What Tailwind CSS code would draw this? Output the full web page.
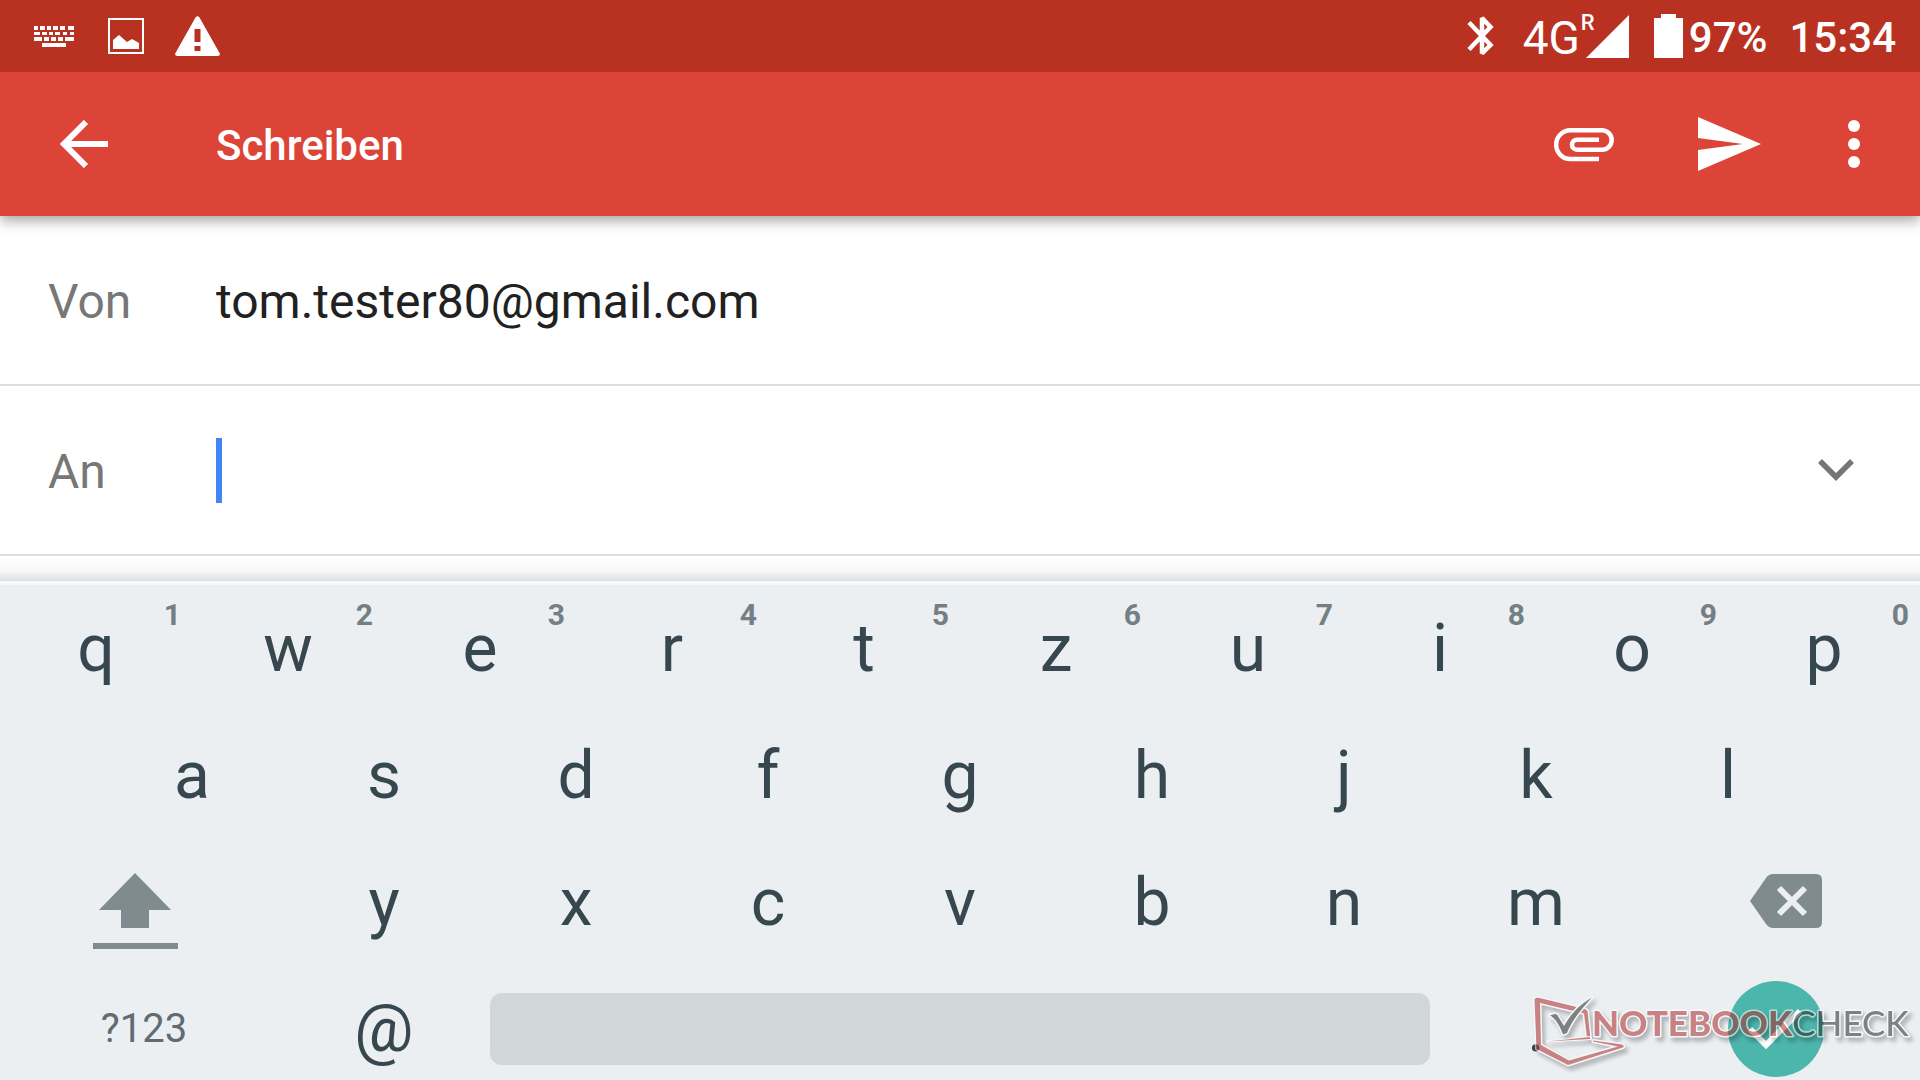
<!DOCTYPE html>
<html lang="de">

<head>
  <meta charset="UTF-8" />
  <meta name="viewport" content="width=device-width, initial-scale=1" />
  <title>Schreiben</title>
  <script src="https://cdn.jsdelivr.net/npm/@tailwindcss/browser@4"></script>
</head>

<body class="relative flex min-h-screen flex-col overflow-hidden bg-white font-['Roboto','Liberation_Sans',sans-serif]">

  <!-- Statusleiste -->
  <div class="relative z-20 flex h-[72px] items-center bg-[#b93221] text-[42px] leading-none font-medium text-white">
    <svg class="ml-[34px] h-[21px] w-10" viewBox="0 0 40 21" fill="currentColor" aria-hidden="true">
      <path d="M0 0h4v4H0zM6 0h5v4H6zM13 0h4v4h-4zM19 0h5v4h-5zM26 0h5v4h-5zM34 0h6v4h-6zM0 6h6v3H0zM8 6h5v3H8zM15 6h4v3h-4zM21 6h5v3h-5zM29 6h4v3h-4zM36 6h4v3h-4zM0 11h8v4H0zM10 11h5v4h-5zM17 11h5v4h-5zM24 11h5v4h-5zM31 11h9v4h-9zM8 17h24v4H8z" />
    </svg>
    <svg class="ml-[34px] size-9" viewBox="0 0 36 36" fill="currentColor" aria-hidden="true">
      <rect x="1" y="1" width="34" height="34" fill="none" stroke="currentColor" stroke-width="2" />
      <path d="M5 22l6-5 8 7 5-3 7 4v6H5z" />
    </svg>
    <svg class="ml-[31px] h-10 w-[45px]" viewBox="0 0 45 40" aria-hidden="true">
      <path fill="currentColor" fill-rule="evenodd" d="M20.500 1.500q2-2.500 4 0L44.800 37.500q.5 2.500-2 2.500H2.200q-2.500 0-2-2.500zM19.500 13v13h6V13zM19.500 30v5h6v-5z" />
    </svg>

    <svg class="ml-auto h-11 w-[27px]" viewBox="0 0 27 44" fill="none" stroke="currentColor" stroke-width="4.500" stroke-miterlimit="2" aria-hidden="true">
      <path d="M2 8.500 23.500 31 15 39.500V4L23.500 13 2 35.500" />
    </svg>
    <div class="relative ml-[29px] flex h-12 w-[106px] items-center">
      <span class="pt-[3px] text-[46px] font-normal">4G</span>
      <sup class="absolute top-0 left-[58px] text-[22px] leading-none font-medium">R</sup>
      <svg class="absolute right-0 h-[43px] w-[43px]" viewBox="0 0 43 43" fill="currentColor" aria-hidden="true">
        <path d="M43 0v43H0z" />
      </svg>
    </div>
    <svg class="ml-[25px] h-11 w-[29px]" viewBox="0 0 29 44" fill="currentColor" aria-hidden="true">
      <path d="M0 4h7V0h15v4h7v40H0z" />
    </svg>
    <span class="ml-[6px] pt-[3px]">97%</span>
    <span class="mr-6 ml-[22px] pt-[3px]">15:34</span>
  </div>

  <!-- App-Leiste -->
  <header class="relative z-10 flex h-36 items-center bg-[#dc4438] text-white shadow-[0_5px_12px_rgba(0,0,0,0.35)]">
    <button class="ml-[60px]" aria-label="Zurück">
      <svg class="size-12" viewBox="0 0 48 48" fill="none" stroke="currentColor" stroke-width="6">
        <path d="M26 2 4 24l22 22M4 24h44" />
      </svg>
    </button>
    <h1 class="ml-[108px] pt-[3px] text-[42px] leading-none font-medium">Schreiben</h1>
    <button class="ml-auto" aria-label="Datei anhängen">
      <svg class="h-9 w-[60px]" viewBox="0 -2 60 36" fill="none" stroke="currentColor" stroke-width="4.500">
        <path d="M45 31H16.500a14.200 14.200 0 0 1 0-28.700H48a9.700 9.700 0 0 1 0 19.400H23a5 5 0 0 1 0-10h22" />
      </svg>
    </button>
    <button class="ml-[84px]" aria-label="Senden">
      <svg class="h-[54px] w-[63px]" viewBox="0 0 63 54" fill="currentColor">
        <path d="M0 0 63 27 0 54V33l45-6-45-6z" />
      </svg>
    </button>
    <button class="mr-[60px] ml-[87px]" aria-label="Weitere Optionen">
      <svg class="h-12 w-3" viewBox="0 0 12 48" fill="currentColor">
        <circle cx="6" cy="6" r="6" /><circle cx="6" cy="24" r="6" /><circle cx="6" cy="42" r="6" />
      </svg>
    </button>
  </header>

  <main class="text-[48px] leading-none">
    <div class="flex h-[170px] items-center border-b-2 border-[#dedede] pl-12">
      <label for="von" class="w-42 pt-[3px] text-[#777]">Von</label>
      <input id="von" type="email" value="tom.tester80@gmail.com" class="min-w-0 flex-1 pt-[3px] text-[#212121] outline-none" />
    </div>
    <div class="flex h-[170px] items-center border-b-2 border-[#dedede] pl-12">
      <label for="an" class="w-42 pt-[3px] text-[#777]">An</label>
      <span class="h-[65px] w-[6px] bg-[#4285f4]"></span>
      <input id="an" type="email" class="min-w-0 flex-1 outline-none" />
      <button class="mr-[66px]" aria-label="Cc/Bcc hinzufügen">
        <svg class="h-[22px] w-9" viewBox="0 0 36 22" fill="none" stroke="#757575" stroke-width="5.500">
          <path d="M2 2l16 16L34 2" />
        </svg>
      </button>
    </div>
    <div class="h-[25px] bg-linear-to-b from-white via-[#f8f8f8] via-60% to-[#dedede]"></div>
  </main>

  <!-- Tastatur -->
  <section class="flex-1 border-t-4 border-[#f5f7f8] bg-[#ebeff2] text-[66px] leading-none text-[#37474f]" aria-label="Tastatur">
    <div id="reihe1" class="grid h-[127px] grid-cols-10"></div>
    <div id="reihe2" class="grid h-[127px] grid-cols-9 px-[5%]"></div>
    <div class="grid h-[127px] grid-cols-20">
      <button class="col-span-3" aria-label="Umschalten">
        <svg class="h-full w-full" viewBox="0 0 288 127" fill="#808b8f">
          <path d="M135 34l36 37h-22v18h-28V71H99zM93 104h85v6H93z" />
        </svg>
      </button>
      <div id="reihe3" class="col-span-14 grid grid-cols-7"></div>
      <button class="col-span-3" aria-label="Löschen">
        <svg class="h-full w-full" viewBox="0 0 288 127">
          <path fill="#808b8f" d="M118 62l16-23q3-4 7-4h43q6 0 6 6v42q0 6-6 6h-43q-4 0-7-4z" />
          <path stroke="#ebeff2" stroke-width="6" d="M147 49l26 26m0-26-26 26" />
        </svg>
      </button>
    </div>
    <div class="grid grid-cols-20 pt-[14px]">
      <button class="col-span-3 text-[40px] text-[#5f6c72]">?123</button>
      <button class="col-span-2">@</button>
      <button class="col-span-10 mx-[10px] h-[72px] self-center rounded-xl bg-[#d1d6d9]" aria-label="Leertaste"></button>
      <button class="col-span-2">.</button>
      <button class="col-span-3 flex h-[97px] items-center justify-center" aria-label="Fertig">
        <svg class="size-24" viewBox="0 0 96 96">
          <circle cx="48" cy="48" r="48" fill="#4db6ac" />
          <path fill="none" stroke="#fff" stroke-width="6" d="M22 48l16 16 34-34" />
        </svg>
      </button>
    </div>
  </section>

  <!-- Wasserzeichen -->
  <svg class="pointer-events-none absolute right-0 bottom-[5px] h-20 w-[390px] font-['Lato',sans-serif] text-[35px] opacity-55 drop-shadow-[3px_4px_2px_rgba(0,0,0,0.45)]" viewBox="0 0 390 80" stroke="#fff" stroke-width="3" stroke-linejoin="round" paint-order="stroke">
    <path fill="#ac2a2c" d="M4.500 4l3-1.500L55 14l2.500 2 3 27.500-3.500-1-3-24L10 8l1 42 28 15.500L88 51.500 63 46.500v-1L92 49.500q3 1.500 1 3L38 70 6.500 54z" />
    <path fill="#ac2a2c" stroke-width="2" d="M17 46.500L60 42v2z" />
    <path fill="#262626" d="M20 20.500q5-2.500 7-1L34 31C40 20 50 9 62 2.500 53 12 42 25 37 38l-4 1.500C30 31 26 24 20 20.500z" />
    <text x="62" y="41" class="font-black" fill="#ac2a2c">NOTEBOOK<tspan class="font-medium" fill="#262626">CHECK</tspan></text>
  </svg>

  <script>
    function fuelleReihe(id, buchstaben, ziffern) {
      const reihe = document.getElementById(id);
      buchstaben.split("").forEach((b, i) => {
        const taste = document.createElement("button");
        taste.className = "relative";
        taste.textContent = b;
        if (ziffern) {
          const hinweis = document.createElement("span");
          hinweis.className = "absolute top-[15px] right-[11px] text-[30px] leading-none font-bold text-[#737f84]";
          hinweis.textContent = ziffern[i];
          taste.appendChild(hinweis);
        }
        reihe.appendChild(taste);
      });
    }

    fuelleReihe("reihe1", "qwertzuiop", "1234567890");
    fuelleReihe("reihe2", "asdfghjkl");
    fuelleReihe("reihe3", "yxcvbnm");
  </script>
</body>

</html>
